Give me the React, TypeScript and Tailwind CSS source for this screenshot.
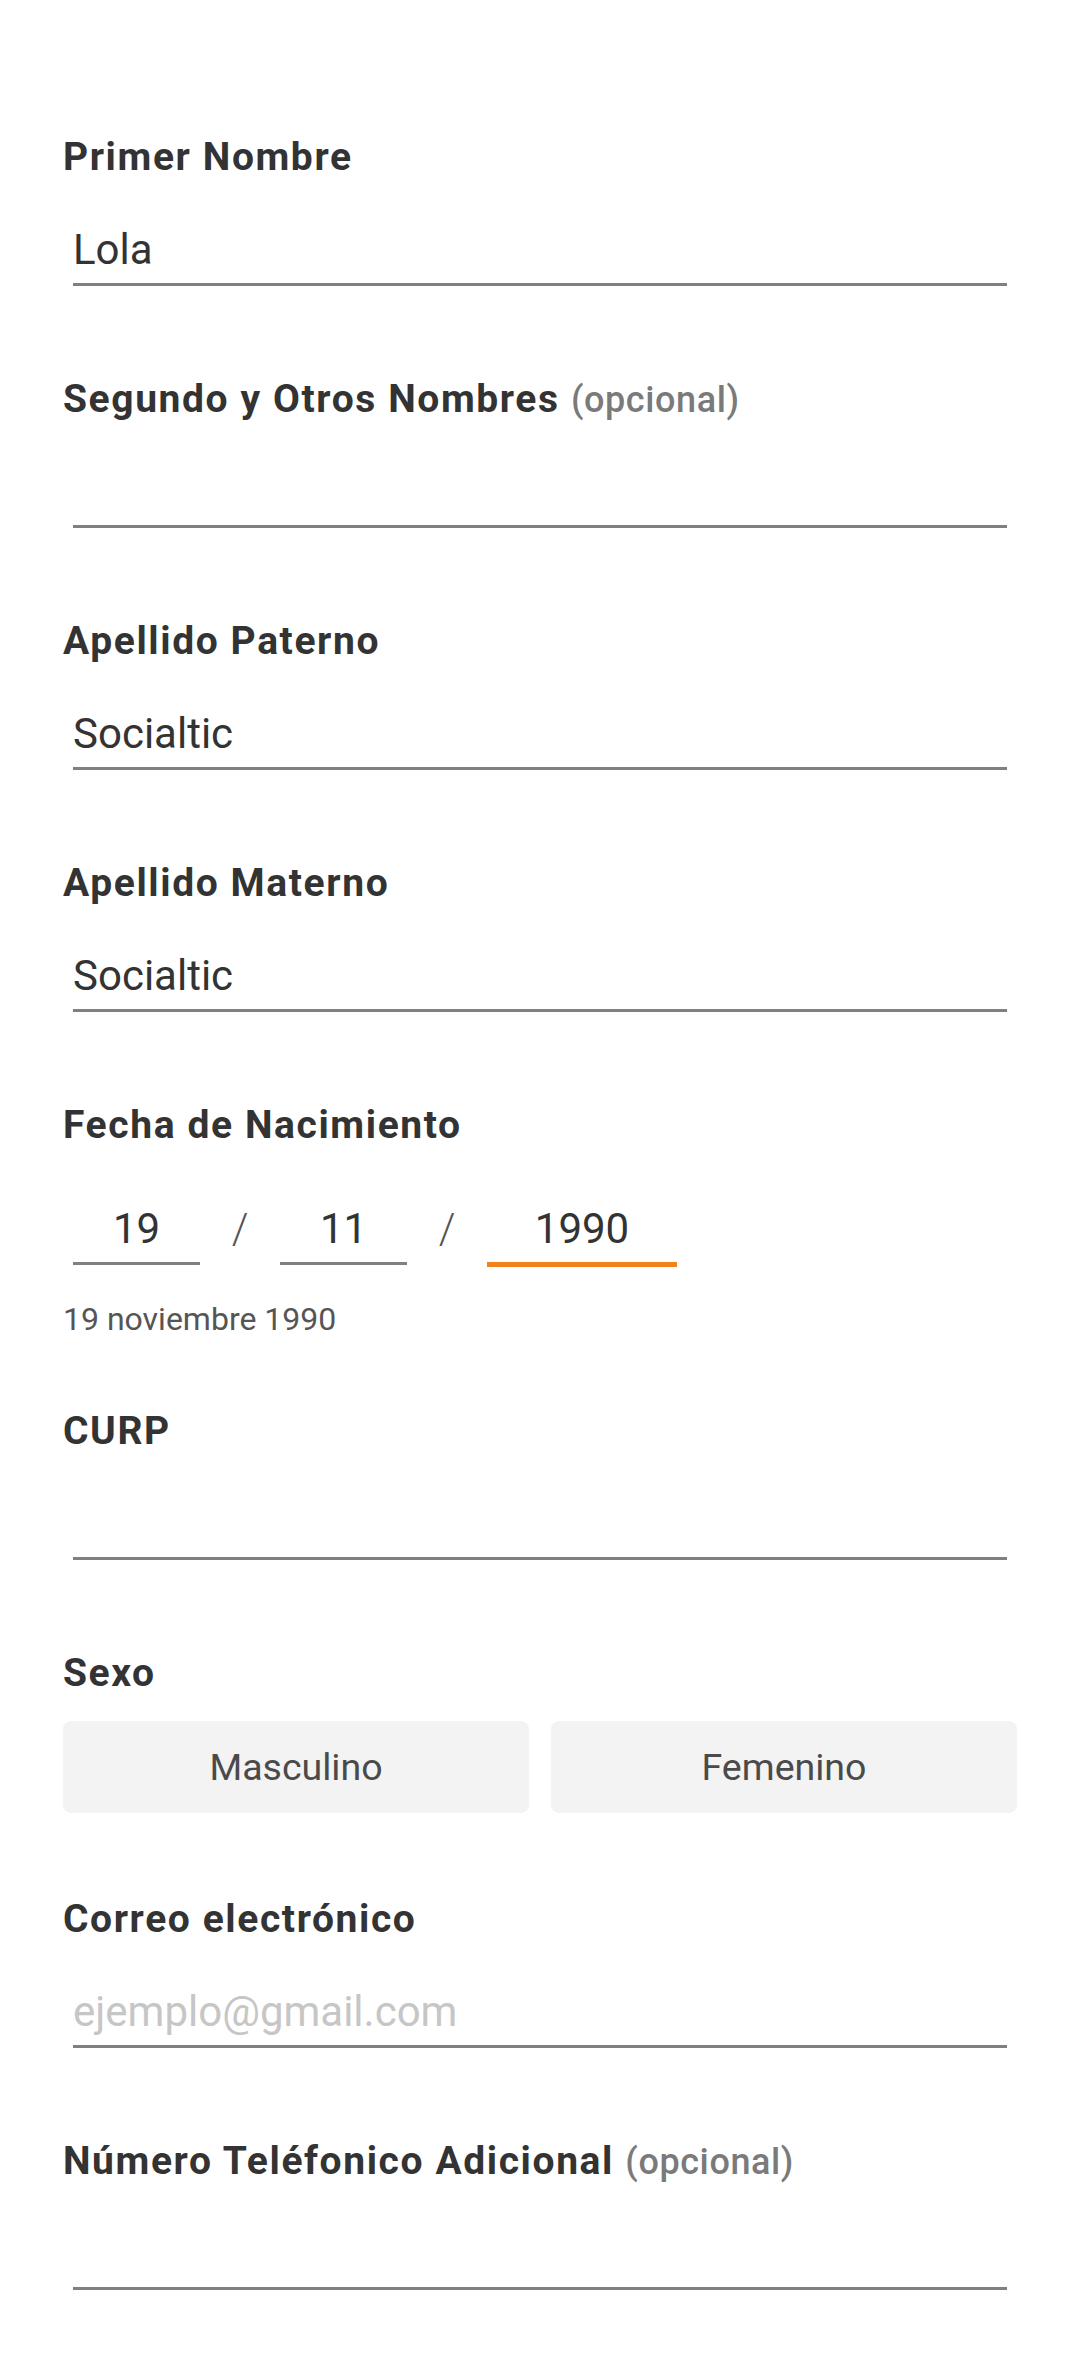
import React from 'react';

type FieldProps = {
  label: string;
  optional?: boolean;
  value?: string;
  placeholder?: string;
};

function Label({ label, optional }: { label: string; optional?: boolean }) {
  return (
    <div className="h-[47px] whitespace-nowrap text-[39px] leading-[47px] font-bold tracking-[1.6px] text-[#333333]">
      {label}
      {optional && (
        <>
          {' '}
          <span className="text-[36px] font-medium tracking-[0.6px] text-[#7a7a7a]">(opcional)</span>
        </>
      )}
    </div>
  );
}

function TextField({ label, optional, value, placeholder }: FieldProps) {
  return (
    <div className="mb-[90px]">
      <Label label={label} optional={optional} />
      <div className="mx-[10px] mt-[44px] border-b-[3px] border-[#808080] pb-[8px]">
        <div className="h-[50px] text-[42px] leading-[50px]">
          {value ? (
            <span className="text-[#333333]">{value}</span>
          ) : (
            <span className="text-[#c6c6c6]">{placeholder}</span>
          )}
        </div>
      </div>
    </div>
  );
}

function DatePart({ value, width, focused }: { value: string; width: string; focused?: boolean }) {
  return (
    <div
      className={
        focused
          ? `${width} border-b-[5px] border-[#f0821e] pb-[8px]`
          : `${width} border-b-[3px] border-[#808080] pb-[8px]`
      }
    >
      <div className="h-[50px] text-center text-[42px] leading-[50px] text-[#333333]">{value}</div>
    </div>
  );
}

function Slash() {
  return <div className="w-[80px] h-[50px] text-center text-[42px] leading-[50px] font-light text-[#555555]">/</div>;
}

export default function App() {
  return (
    <div className="min-h-screen bg-white px-[63px] pt-[134px] font-['Roboto',sans-serif]">
      <TextField label="Primer Nombre" value="Lola" />
      <TextField label="Segundo y Otros Nombres" optional />
      <TextField label="Apellido Paterno" value="Socialtic" />
      <TextField label="Apellido Materno" value="Socialtic" />

      <div>
        <Label label="Fecha de Nacimiento" />
        <div className="ml-[10px] mt-[55px] flex items-start">
          <DatePart value="19" width="w-[127px]" />
          <Slash />
          <DatePart value="11" width="w-[127px]" />
          <Slash />
          <DatePart value="1990" width="w-[190px]" focused />
        </div>
        <div className="mt-[33px] mb-[70px] text-[32px] leading-[38px] text-[#555555]">19 noviembre 1990</div>
      </div>

      <TextField label="CURP" />

      <div className="mb-[83px]">
        <Label label="Sexo" />
        <div className="mt-[24px] grid grid-cols-2 gap-[22px]">
          <button className="h-[92px] rounded-[8px] bg-[#f3f3f3] text-[37.5px] text-[#4a4a4a]">Masculino</button>
          <button className="h-[92px] rounded-[8px] bg-[#f3f3f3] text-[37.5px] text-[#4a4a4a]">Femenino</button>
        </div>
      </div>

      <TextField label="Correo electrónico" placeholder="ejemplo@gmail.com" />
      <TextField label="Número Teléfonico Adicional" optional />
    </div>
  );
}
